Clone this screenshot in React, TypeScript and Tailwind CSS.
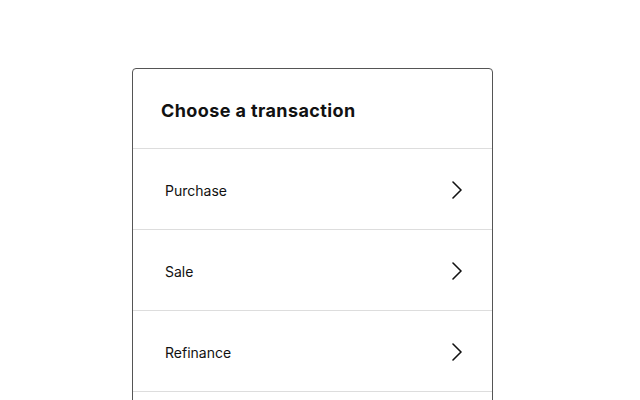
const items = ["Purchase", "Sale", "Refinance"];

function Chevron() {
  return (
    <svg width="12" height="18" viewBox="0 0 12 18" fill="none" className="shrink-0">
      <path d="M2 1 L10 9 L2 17" stroke="#111" strokeWidth="1.6" strokeLinecap="round" strokeLinejoin="round" />
    </svg>
  );
}

export default function App() {
  return (
    <div className="h-[400px] w-[640px] overflow-hidden bg-white pt-[68px] pl-[132px] font-['Inter',sans-serif] text-[#111]">
      <div className="h-[400px] w-[361px] rounded-[4px] border border-[#555]">
        <div className="flex h-[80px] items-center border-b border-[#ddd] pt-[3px] pl-[28px]">
          <h1 className="text-[18px] font-bold tracking-[0.4px]">Choose a transaction</h1>
        </div>
        {items.map((item) => (
          <div
            key={item}
            className="flex h-[81px] items-center justify-between border-b border-[#ddd] pt-[2px] pr-[29px] pl-[32px]"
          >
            <span className="text-[14px]">{item}</span>
            <Chevron />
          </div>
        ))}
      </div>
    </div>
  );
}
